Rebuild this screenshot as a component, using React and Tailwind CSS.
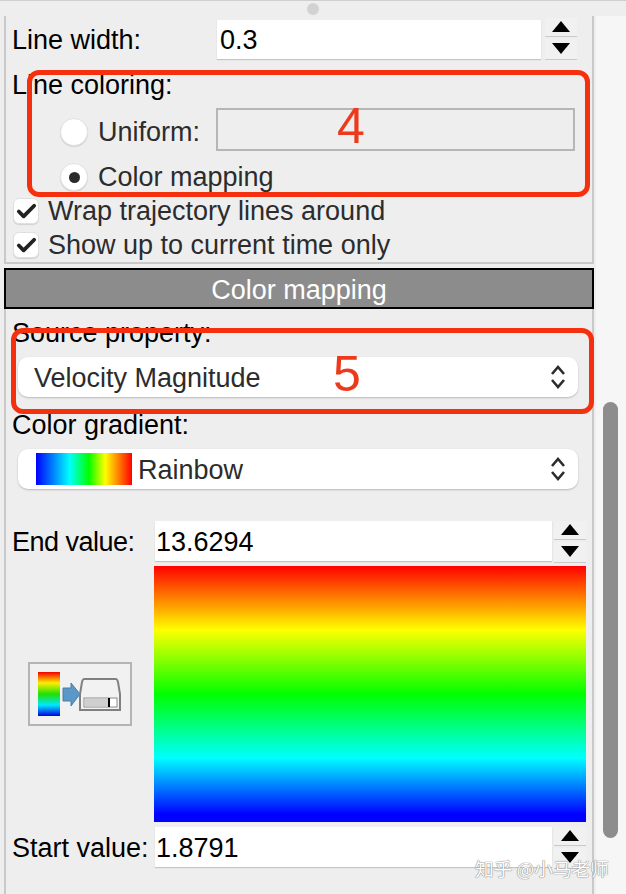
import { Check } from 'lucide-react';

const rainbowDown = 'bg-[linear-gradient(to_bottom,#ff0000,#ffff00_25%,#00ff00_50%,#00ffff_75%,#0000ff_97%,#0000ff)]';

function Spinner({ className = '' }) {
  return (
    <div className={`flex w-[32px] shrink-0 flex-col gap-[3px] ${className}`}>
      <div className="flex h-[18px] items-center justify-center bg-[#f1f1f1] shadow-[0_1px_0_#c9c9c9]">
        <div className="h-0 w-0 border-x-[9px] border-b-[11px] border-x-transparent border-b-black" />
      </div>
      <div className="flex h-[20px] items-center justify-center bg-[#f1f1f1] shadow-[0_1px_0_#c9c9c9]">
        <div className="h-0 w-0 border-x-[9px] border-t-[11px] border-x-transparent border-t-black" />
      </div>
    </div>
  );
}

function Radio({ on }) {
  return (
    <div className="flex h-[28px] w-[28px] items-center justify-center rounded-full border border-[#e2e2e2] bg-white shadow-[0_1px_1px_#d0d0d0]">
      {on && <div className="h-[11px] w-[11px] rounded-full bg-[#2a2a2a]" />}
    </div>
  );
}

function CheckRow({ label }) {
  return (
    <div className="flex h-[34px] items-center gap-[9px] pl-[7px]">
      <div className="flex h-[26px] w-[26px] items-center justify-center rounded-[6px] border border-[#e0e0e0] bg-white shadow-[0_1px_1px_#d0d0d0]">
        <Check size={23} strokeWidth={4} className="text-[#222]" />
      </div>
      <span className="text-[#2c2c2c]">{label}</span>
    </div>
  );
}

function UpDown() {
  return (
    <svg width="18" height="26" viewBox="0 0 18 26" fill="none" stroke="#2c2c2c" strokeWidth="2.6">
      <path d="M3 10 L9 3 L15 10" />
      <path d="M3 16 L9 23 L15 16" />
    </svg>
  );
}

function Select({ children, className }) {
  return (
    <div className={`ml-[12px] flex h-[40px] w-[560px] items-center justify-between rounded-[10px] bg-white pr-[11px] text-[#2c2c2c] shadow-[0_1px_2px_#b9b9b9] ${className}`}>
      <div className="flex items-center">{children}</div>
      <UpDown />
    </div>
  );
}

function ExportIcon() {
  return (
    <svg width="104" height="64" viewBox="0 0 104 64" className="block">
      <defs>
        <linearGradient id="bar" x1="0" y1="0" x2="0" y2="1">
          <stop offset="0" stopColor="#f00000" />
          <stop offset="0.25" stopColor="#ffee00" />
          <stop offset="0.5" stopColor="#20e000" />
          <stop offset="0.75" stopColor="#00e8ff" />
          <stop offset="1" stopColor="#0000e0" />
        </linearGradient>
      </defs>
      <rect x="1" y="1" width="102" height="62" fill="#f1f1f1" stroke="#b4b4b4" strokeWidth="2" />
      <rect x="10" y="10" width="22" height="44" fill="url(#bar)" />
      <path d="M35 26 H43 V21 L52 32 L43 44 V39 H35 Z" fill="#5b97c7" stroke="#4a7ea8" />
      <path d="M56 17 H88 Q89 17 90 20 L92 32 V48 H52 V32 L54 20 Q55 17 56 17 Z" fill="#f2f2f2" stroke="#808080" strokeWidth="2" />
      <rect x="56" y="36" width="33" height="9" fill="#fff" stroke="#8a8a8a" />
      <rect x="57" y="37" width="23" height="7" fill="#cfcfcf" />
      <rect x="80" y="36" width="2" height="9" fill="#000" />
    </svg>
  );
}

export default function App() {
  return (
    <div className="relative h-[894px] w-[626px] overflow-hidden bg-[#f6f6f6] font-['Liberation_Sans',sans-serif] text-[27px] leading-[32px] text-black">
      {/* grab bar */}
      <div className="relative flex h-[16px] items-center justify-center border-t border-[#cfcfcf] bg-[#eeeeee]">
        <div className="h-[12px] w-[12px] rounded-full bg-[#d2d2d2]" />
      </div>

      <div className="w-[596px] bg-[#eeeeee]">
        {/* Line settings group */}
        <div className="ml-[4px] mr-[2px] h-[248px] border-x-2 border-b-2 border-[#c9c9c9]">
          <div className="flex h-[44px] items-center pl-[6px] pt-[3px]">
            <span className="w-[205px]">Line width:</span>
            <div className="mr-[4px] flex h-[39px] w-[324px] items-center bg-white pl-[3px] shadow-[0_1px_1px_#c4c4c4]">0.3</div>
            <Spinner className="mb-[3px]" />
          </div>
          <div className="flex h-[44px] items-center pl-[6px] pt-[5px]">Line coloring:</div>
          <div className="flex h-[50px] items-center pl-[54px] pt-[6px]">
            <Radio />
            <span className="ml-[10px] w-[118px] text-[#2c2c2c]">Uniform:</span>
            <div className="mb-[6px] h-[43px] w-[359px] border-2 border-[#b6b6b6] bg-[#eeeeee]" />
          </div>
          <div className="flex h-[40px] items-center pl-[54px] pt-[6px]">
            <Radio on />
            <span className="ml-[10px] text-[#2c2c2c]">Color mapping</span>
          </div>
          <CheckRow label="Wrap trajectory lines around" />
          <CheckRow label="Show up to current time only" />
        </div>

        {/* Color mapping group */}
        <div className="mt-[4px] ml-[4px] flex h-[41px] w-[590px] items-center justify-center border-2 border-black bg-[#8c8c8c] pt-[2px] text-white">
          Color mapping
        </div>
        <div className="ml-[4px] mr-[2px] h-[586px] border-x-2 border-[#c9c9c9]">
          <div className="h-[48px] pl-[6px] pt-[8px]">Source property:</div>
          <Select className="pl-[16px]"><span className="pt-[2px]">Velocity Magnitude</span></Select>
          <div className="mt-[12px] h-[40px] pl-[6px]">Color gradient:</div>
          <Select className="pl-[18px]">
            <div className="mr-[6px] h-[32px] w-[96px] bg-[linear-gradient(to_right,#0000ff,#00ffff_35%,#00ff00_55%,#ffff00_72%,#ff0000)]" />
            <span className="pt-[2px]">Rainbow</span>
          </Select>

          <div className="mt-[32px] flex h-[40px] items-center pl-[6px]">
            <span className="w-[143px] pt-[2px] tracking-[-0.5px]">End value:</span>
            <div className="mr-[2px] flex h-[40px] w-[397px] items-center bg-white pl-[1px] pt-[2px] shadow-[0_1px_1px_#c4c4c4]">13.6294</div>
            <Spinner />
          </div>
          <div className="mt-[5px] flex h-[256px]">
            <div className="flex w-[148px] items-center pl-[22px]">
              <ExportIcon />
            </div>
            <div className={`h-[256px] w-[432px] ${rainbowDown}`} />
          </div>
          <div className="mt-[5px] flex h-[40px] items-center pl-[6px]">
            <span className="w-[143px] pt-[2px]">Start value:</span>
            <div className="mr-[2px] flex h-[40px] w-[397px] items-center bg-white pl-[1px] pt-[2px] shadow-[0_1px_1px_#c4c4c4]">1.8791</div>
            <Spinner />
          </div>
        </div>
      </div>

      {/* scrollbar thumb */}
      <div className="absolute left-[603px] top-[402px] h-[436px] w-[15px] rounded-full bg-[#8d8d8d]" />

      {/* red annotations */}
      <div className="absolute left-[27px] top-[70px] h-[127px] w-[563px] rounded-[12px] border-[5px] border-[#f5300f]" />
      <div className="absolute left-[11px] top-[328px] h-[86px] w-[583px] rounded-[12px] border-[5px] border-[#f5300f]" />
      <div className="absolute left-[337px] top-[101px] text-[50px] leading-[50px] text-[#ee3a1c]">4</div>
      <div className="absolute left-[333px] top-[349px] text-[50px] leading-[50px] text-[#ee3a1c]">5</div>

      {/* watermark */}
      <div className="absolute left-[475px] top-[856px] font-['Noto_Sans_CJK_SC',sans-serif] text-[18.7px] leading-[24px] text-white [text-shadow:0_0_1px_#777,0_0_1px_#777]">
        知乎 @小马老师
      </div>
    </div>
  );
}
